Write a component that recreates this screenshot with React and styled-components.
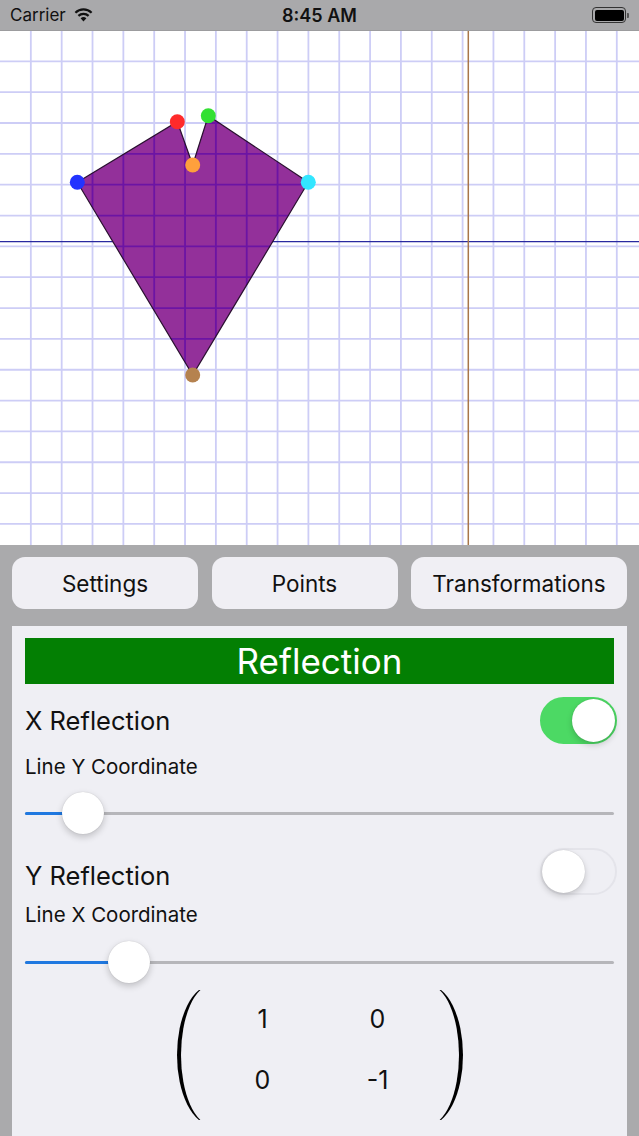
import styled, { createGlobalStyle } from "styled-components";

const GlobalStyle = createGlobalStyle`
  html, body {
    margin: 0;
    padding: 0;
  }
  body {
    font-family: Inter, "Noto Sans", sans-serif;
    background: #aaaaac;
  }
`;

const Screen = styled.div`
  width: 639px;
  height: 1136px;
  display: flex;
  flex-direction: column;
  background: #aaaaac;
  overflow: hidden;
`;

const StatusBar = styled.div`
  height: 30px;
  display: grid;
  grid-template-columns: 1fr auto 1fr;
  align-items: center;
  padding: 0 10px;
  color: #111;
  font-size: 17px;
  background: #a9a9ab;
`;

const Carrier = styled.div`
  display: flex;
  align-items: center;
  gap: 8px;
`;

const Clock = styled.div`
  font-weight: 600;
  font-size: 18px;
`;

const Battery = styled.div`
  justify-self: end;
  display: flex;
  align-items: center;
  gap: 1px;
`;

const BatteryBody = styled.div`
  width: 29px;
  height: 11px;
  border: 1.5px solid #333;
  border-radius: 4px;
  padding: 1.5px;
  &::after {
    content: "";
    display: block;
    width: 100%;
    height: 100%;
    background: #000;
    border-radius: 2px;
  }
`;

const BatteryNub = styled.div`
  width: 2px;
  height: 5px;
  background: #555;
  border-radius: 0 1px 1px 0;
`;

const Canvas = styled.div`
  height: 515px;
  background: #fff;
  border-top: 1px solid #9c9c9e;
  box-sizing: border-box;
`;

const Bottom = styled.div`
  flex: 1;
  display: flex;
  flex-direction: column;
  gap: 17px;
  padding: 12px 12px 0 12px;
`;

const TabRow = styled.div`
  display: grid;
  grid-template-columns: 186px 186px 1fr;
  gap: 13.5px;
  height: 52px;
`;

const TabButton = styled.button`
  border: none;
  border-radius: 13px;
  background: #f0eff4;
  color: #111;
  font-family: inherit;
  font-size: 22.5px;
  padding: 0;
`;

const Card = styled.div`
  flex: 1;
  background: #efeff4;
  padding: 12px 13px 0 13px;
  display: flex;
  flex-direction: column;
`;

const Header = styled.div`
  height: 46px;
  background: #037f03;
  color: #fff;
  font-size: 35px;
  display: flex;
  align-items: center;
  justify-content: center;
`;

const ToggleRow = styled.div`
  margin-top: ${(p) => p.$top}px;
  height: 47px;
  display: flex;
  align-items: center;
  justify-content: space-between;
  margin-right: -3px;
`;

const RowLabel = styled.div`
  font-size: 25.5px;
  color: #111;
  padding-top: ${(p) => p.$shift || 0}px;
`;

const Toggle = styled.div`
  width: 77px;
  height: 47px;
  box-sizing: border-box;
  border-radius: 24px;
  background: ${(p) => (p.$on ? "#4cd964" : "#efeff4")};
  border: 2px solid ${(p) => (p.$on ? "#4cd964" : "#e4e4ea")};
  display: flex;
  align-items: center;
  justify-content: ${(p) => (p.$on ? "flex-end" : "flex-start")};
  padding: 0;
`;

const Knob = styled.div`
  width: 43px;
  height: 43px;
  border-radius: 50%;
  background: #fff;
  box-shadow: 0 3px 6px rgba(0, 0, 0, 0.18), 0 0 1px rgba(0, 0, 0, 0.2);
`;

const SubLabel = styled.div`
  margin-top: ${(p) => p.$top}px;
  font-size: 20.5px;
  line-height: 24px;
  color: #111;
`;

const Slider = styled.div`
  margin-top: ${(p) => p.$top}px;
  height: 42px;
  position: relative;
  display: flex;
  align-items: center;
`;

const Track = styled.div`
  width: 100%;
  height: 3px;
  border-radius: 2px;
  background: #b6b6ba;
`;

const Fill = styled.div`
  position: absolute;
  left: 0;
  top: 19.5px;
  height: 3px;
  border-radius: 2px;
  background: #1f78e0;
`;

const Thumb = styled.div`
  position: absolute;
  top: 0;
  width: 42px;
  height: 42px;
  margin-left: -21px;
  border-radius: 50%;
  background: #fff;
  box-shadow: 0 3px 7px rgba(0, 0, 0, 0.2), 0 0 1px rgba(0, 0, 0, 0.2);
`;

const Matrix = styled.div`
  margin-top: 7px;
  height: 130px;
  display: flex;
  justify-content: center;
`;

const Paren = styled.div`
  width: 24px;
  height: 130px;
  overflow: hidden;
  &::before {
    content: "";
    display: block;
    width: 70px;
    height: 140px;
    margin-top: -5px;
    margin-left: ${(p) => (p.$right ? "-46px" : "0")};
    box-sizing: border-box;
    border-radius: 50%;
    border-left: ${(p) => (p.$right ? "none" : "4px solid #000")};
    border-right: ${(p) => (p.$right ? "4px solid #000" : "none")};
  }
`;

const Cells = styled.div`
  display: grid;
  grid-template-columns: 60px 60px;
  grid-template-rows: 30px 30px;
  column-gap: 55px;
  row-gap: 31px;
  padding: 14px 31px 0 32px;
`;

const Cell = styled.div`
  font-size: 25px;
  color: #111;
  display: flex;
  align-items: center;
  justify-content: center;
`;

const W = 639;
const H = 515;
const STEP = 30.84;

const points = [
  { x: 77.3, y: 152.3, c: "#2233ff" },
  { x: 177.3, y: 91.7, c: "#ff2a2a" },
  { x: 192.7, y: 135, c: "#ffa03c" },
  { x: 208.3, y: 85.7, c: "#33e033" },
  { x: 308.3, y: 152.3, c: "#33e6ff" },
  { x: 192.7, y: 345, c: "#b5824f" },
];

function Wifi() {
  return (
    <svg width="19" height="14" viewBox="0 0 19 14">
      <path d="M9.5 13.5 L6.6 10.3 A4.2 4.2 0 0 1 12.4 10.3 Z" fill="#111" />
      <path
        d="M4.4 7.9 A7.4 7.4 0 0 1 14.6 7.9"
        fill="none"
        stroke="#111"
        strokeWidth="2.2"
      />
      <path
        d="M1.4 4.7 A11.6 11.6 0 0 1 17.6 4.7"
        fill="none"
        stroke="#111"
        strokeWidth="2.2"
      />
    </svg>
  );
}

function GridLines({ color }) {
  const vx = [];
  for (let k = 1; k * STEP < W; k++) vx.push(k * STEP);
  const hy = [];
  for (let k = 1; k * STEP < H; k++) hy.push(k * STEP + 0.5);
  return (
    <g stroke={color} strokeWidth="1.8">
      {vx.map((x) => (
        <line key={"v" + x} x1={x} y1="0" x2={x} y2={H} />
      ))}
      {hy.map((y) => (
        <line key={"h" + y} x1="0" y1={y} x2={W} y2={y} />
      ))}
    </g>
  );
}

function Plane() {
  const poly = points.map((p) => `${p.x},${p.y}`).join(" ");

  return (
    <svg width={W} height={H - 1} viewBox={`0 1 ${W} ${H - 1}`}>
      <defs>
        <clipPath id="shape">
          <polygon points={poly} />
        </clipPath>
      </defs>
      <GridLines color="#cdcdf6" />
      <line x1="0" y1="211.7" x2={W} y2="211.7" stroke="#2a2aa0" strokeWidth="1.2" />
      <line x1="468.3" y1="0" x2="468.3" y2={H} stroke="#a8764a" strokeWidth="1.5" />
      <polygon points={poly} fill="#93309a" />
      <g clipPath="url(#shape)">
        <GridLines color="#6c14a4" />
      </g>
      <polygon points={poly} fill="none" stroke="#2a1030" strokeWidth="1.2" />
      {points.map((p) => (
        <circle key={p.c} cx={p.x} cy={p.y} r="7.5" fill={p.c} />
      ))}
    </svg>
  );
}

function RangeSlider({ top, value }) {
  return (
    <Slider $top={top}>
      <Track />
      <Fill style={{ width: value }} />
      <Thumb style={{ left: value }} />
    </Slider>
  );
}

export default function App() {
  return (
    <Screen>
      <GlobalStyle />
      <StatusBar>
        <Carrier>
          Carrier
          <Wifi />
        </Carrier>
        <Clock>8:45 AM</Clock>
        <Battery>
          <BatteryBody />
          <BatteryNub />
        </Battery>
      </StatusBar>
      <Canvas>
        <Plane />
      </Canvas>
      <Bottom>
        <TabRow>
          <TabButton>Settings</TabButton>
          <TabButton>Points</TabButton>
          <TabButton>Transformations</TabButton>
        </TabRow>
        <Card>
          <Header>Reflection</Header>
          <ToggleRow $top={13}>
            <RowLabel>X Reflection</RowLabel>
            <Toggle $on>
              <Knob />
            </Toggle>
          </ToggleRow>
          <SubLabel $top={11}>Line Y Coordinate</SubLabel>
          <RangeSlider top={13} value={58} />
          <ToggleRow $top={14}>
            <RowLabel $shift={8}>Y Reflection</RowLabel>
            <Toggle>
              <Knob />
            </Toggle>
          </ToggleRow>
          <SubLabel $top={8}>Line X Coordinate</SubLabel>
          <RangeSlider top={14} value={104} />
          <Matrix>
            <Paren />
            <Cells>
              <Cell>1</Cell>
              <Cell>0</Cell>
              <Cell>0</Cell>
              <Cell>-1</Cell>
            </Cells>
            <Paren $right />
          </Matrix>
        </Card>
      </Bottom>
    </Screen>
  );
}
